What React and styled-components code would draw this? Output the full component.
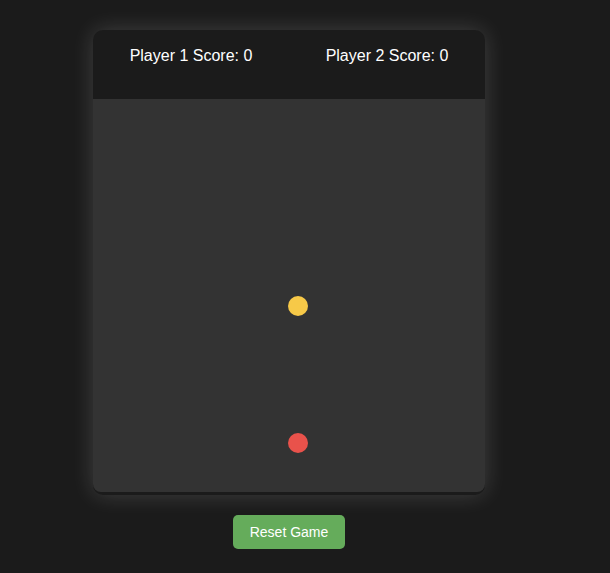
import React from "react";
import styled, { createGlobalStyle } from "styled-components";

const Global = createGlobalStyle`
  html, body {
    margin: 0;
    padding: 0;
    background: #1b1b1b;
    font-family: "Liberation Sans", Arial, sans-serif;
  }
`;

const Page = styled.div`
  width: 578px;
  display: flex;
  flex-direction: column;
  align-items: center;
  padding-top: 30px;
  min-height: 573px;
  box-sizing: border-box;
`;

const Board = styled.div`
  width: 392px;
  background: #1b1b1b;
  border-radius: 10px;
  padding-bottom: 3px;
  box-shadow: 0 0 22px rgba(255, 255, 255, 0.17);
`;

const ScoreBar = styled.div`
  display: flex;
  justify-content: space-around;
  align-items: flex-start;
  height: 69px;
  box-sizing: border-box;
  padding-top: 17px;
`;

const Score = styled.span`
  color: #ffffff;
  font-size: 16px;
  line-height: 18px;
`;

const Field = styled.div`
  position: relative;
  height: 393px;
  background: #333333;
  border-radius: 0 0 8px 8px;
`;

const Ball = styled.div`
  position: absolute;
  width: 20px;
  height: 20px;
  border-radius: 50%;
  background: ${(p) => p.$color};
`;

const ResetButton = styled.button`
  margin-top: 20px;
  width: 112px;
  height: 34px;
  border: none;
  border-radius: 5px;
  background: #65ac5b;
  color: #ffffff;
  font-family: "Liberation Sans", Arial, sans-serif;
  font-size: 14px;
  cursor: pointer;
`;

const balls = [
  { id: "p1", color: "#f7c948", x: 195, y: 197 },
  { id: "p2", color: "#e9524b", x: 195, y: 334 },
];

export default function App() {
  return (
    <>
      <Global />
      <Page>
        <Board>
          <ScoreBar>
            <Score>Player 1 Score: 0</Score>
            <Score>Player 2 Score: 0</Score>
          </ScoreBar>
          <Field>
            {balls.map((b) => (
              <Ball key={b.id} $color={b.color} style={{ left: b.x, top: b.y }} />
            ))}
          </Field>
        </Board>
        <ResetButton>Reset Game</ResetButton>
      </Page>
    </>
  );
}
